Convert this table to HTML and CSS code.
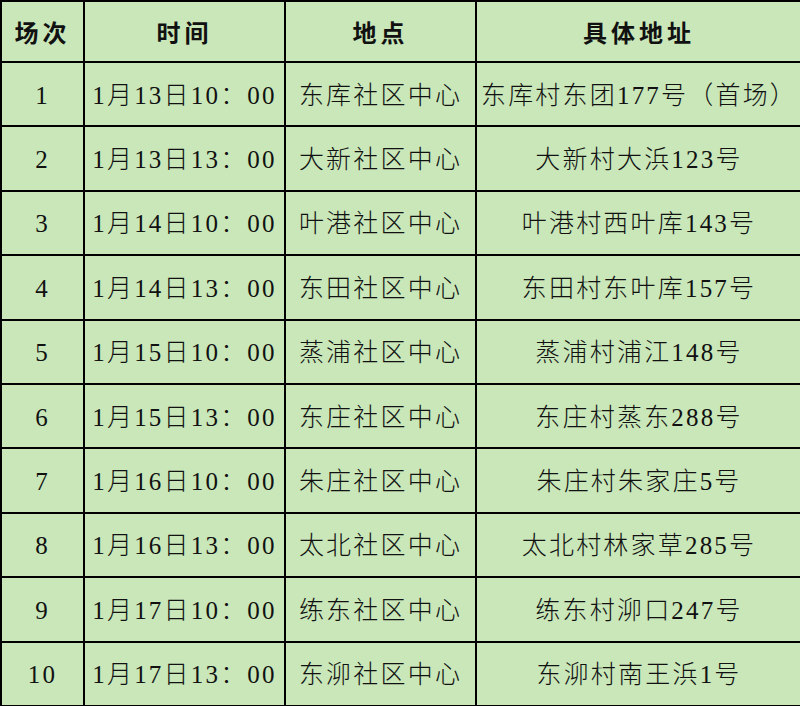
FILE: index.html
```html
<!DOCTYPE html>
<html lang="zh-CN">
<head>
<meta charset="utf-8">
<link rel="stylesheet" href="styles.css">
</head>
<body>
<table class="sched">
  <colgroup>
    <col class="c1"><col class="c2"><col class="c3"><col class="c4">
  </colgroup>
  <thead>
    <tr class="head"><th>场次</th><th>时间</th><th>地点</th><th>具体地址</th></tr>
  </thead>
  <tbody>
    <tr><td>1</td><td>1月13日10：00</td><td>东库社区中心</td><td>东库村东团177号（首场）</td></tr>
    <tr><td>2</td><td>1月13日13：00</td><td>大新社区中心</td><td>大新村大浜123号</td></tr>
    <tr><td>3</td><td>1月14日10：00</td><td>叶港社区中心</td><td>叶港村西叶库143号</td></tr>
    <tr><td>4</td><td>1月14日13：00</td><td>东田社区中心</td><td>东田村东叶库157号</td></tr>
    <tr><td>5</td><td>1月15日10：00</td><td>蒸浦社区中心</td><td>蒸浦村浦江148号</td></tr>
    <tr><td>6</td><td>1月15日13：00</td><td>东庄社区中心</td><td>东庄村蒸东288号</td></tr>
    <tr><td>7</td><td>1月16日10：00</td><td>朱庄社区中心</td><td>朱庄村朱家庄5号</td></tr>
    <tr><td>8</td><td>1月16日13：00</td><td>太北社区中心</td><td>太北村林家草285号</td></tr>
    <tr><td>9</td><td>1月17日10：00</td><td>练东社区中心</td><td>练东村泖口247号</td></tr>
    <tr><td>10</td><td>1月17日13：00</td><td>东泖社区中心</td><td>东泖村南王浜1号</td></tr>
  </tbody>
</table>
</body>
</html>
```
FILE: styles.css
```css
html, body {
  margin: 0;
  padding: 0;
  background: #c9e7b9;
  overflow: hidden;
}
.sched {
  border-collapse: collapse;
  table-layout: fixed;
  width: 801px;
  background: #c9e7b9;
  color: #111;
}
.c1 { width: 83px; }
.c2 { width: 201px; }
.c3 { width: 191px; }
.c4 { width: 326px; }
.sched th, .sched td {
  border: 2px solid #000;
  padding: 0;
  text-align: center;
  vertical-align: middle;
  white-space: nowrap;
  overflow: hidden;
  line-height: 30px;
}
.sched th {
  height: 59px;
  font-family: "Noto Sans CJK SC", sans-serif;
  font-weight: 700;
  font-size: 24px;
  letter-spacing: 4px;
}
.sched td {
  height: 59.4px;
  padding-top: 3px;
  font-family: "Liberation Serif", "Noto Sans CJK SC", serif;
  font-weight: 300;
  font-size: 25px;
  letter-spacing: 2.2px;
}
```
